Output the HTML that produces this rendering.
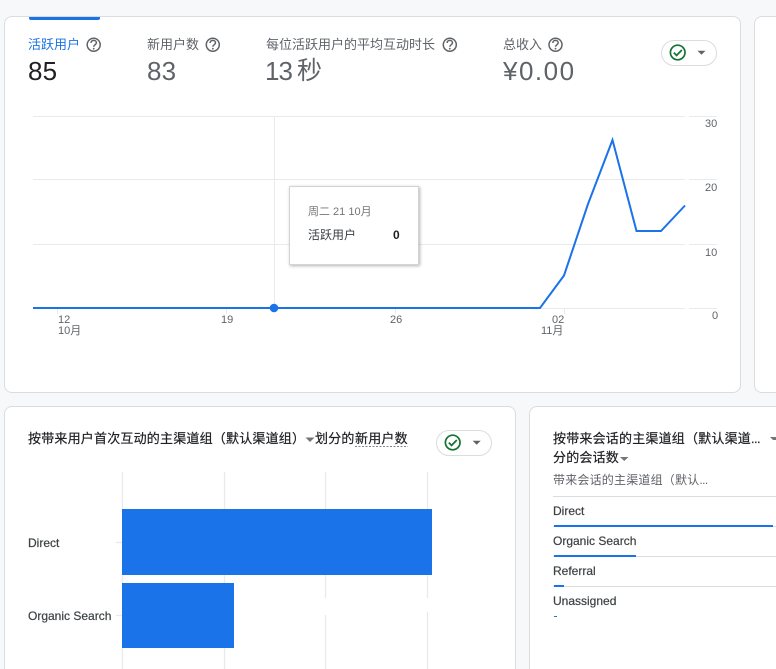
<!DOCTYPE html>
<html lang="zh">
<head>
<meta charset="utf-8">
<title>Analytics</title>
<style>
html,body{margin:0;padding:0;width:776px;height:669px;overflow:hidden;background:#f7f8fa;font-family:"Liberation Sans","Noto Sans CJK SC",sans-serif;}
#w{position:relative;width:776px;height:669px;overflow:hidden;}
.card{position:absolute;background:#fff;border:1px solid #dadce0;border-radius:8px;box-sizing:border-box;}
.t{position:absolute;white-space:nowrap;line-height:16px;}
.lb{font-size:13px;color:#5f6368;height:16px;}
.val{font-size:26px;color:#5f6368;line-height:30px;letter-spacing:.2px;}
.ax{font-size:11px;color:#5f6368;line-height:12px;}
.ti{font-size:13px;color:#202124;letter-spacing:.2px;-webkit-text-stroke:.2px #202124;}
.rw{font-size:12px;color:#3c4043;-webkit-text-stroke:.2px #3c4043;}
.b{position:absolute;background:#1a73e8;}
.g{position:absolute;background:#dadce0;}
.d{letter-spacing:-.6px;}
svg{position:absolute;overflow:hidden;}
</style>
</head>
<body>
<div id="w">
<div class="card" style="left:4px;top:16px;width:737px;height:377px"></div>
<div class="card" style="left:754px;top:16px;width:22px;height:377px;border-right:0;border-radius:8px 0 0 8px"></div>
<div class="card" style="left:4px;top:406px;width:512px;height:263px;border-bottom:0;border-radius:8px 8px 0 0"></div>
<div class="card" style="left:529px;top:406px;width:247px;height:263px;border-bottom:0;border-right:0;border-radius:8px 0 0 0"></div>

<div class="b" style="left:29px;top:17px;width:71px;height:3px;border-radius:0 0 2px 2px"></div>

<div class="t lb" style="left:28px;top:37px;color:#1a73e8">活跃用户</div>
<div class="t val" style="left:28px;top:56px;color:#202124">85</div>
<div class="t lb" style="left:147px;top:37px">新用户数</div>
<div class="t val" style="left:147px;top:56px">83</div>
<div class="t lb" style="left:266px;top:37px">每位活跃用户的平均互动时长</div>
<div class="t val" style="left:265px;top:56px;letter-spacing:-1px">13</div>
<div class="t val" style="left:297px;top:56px;letter-spacing:0;font-size:25px">秒</div>
<div class="t lb" style="left:503px;top:37px">总收入</div>
<div class="t val" style="left:503px;top:56px;letter-spacing:1.500px">¥0.00</div>

<svg style="left:0;top:0" width="776" height="669" viewBox="0 0 776 669">
  <g fill="none" stroke="#5f6368" stroke-width="1.5">
    <circle cx="93.7" cy="44.7" r="6.5"/><path d="M91 43c0-1.600 1.200-2.600 2.700-2.600s2.700 1 2.700 2.400c0 2-2.700 2-2.700 4"/>
    <circle cx="212.8" cy="44.7" r="6.5"/><path d="M210.100 43c0-1.600 1.200-2.600 2.700-2.600s2.700 1 2.700 2.400c0 2-2.700 2-2.700 4"/>
    <circle cx="449.800" cy="44.7" r="6.5"/><path d="M447.100 43c0-1.600 1.200-2.600 2.700-2.600s2.700 1 2.700 2.400c0 2-2.700 2-2.700 4"/>
    <circle cx="555.500" cy="44.7" r="6.5"/><path d="M552.800 43c0-1.600 1.200-2.600 2.700-2.600s2.700 1 2.700 2.400c0 2-2.700 2-2.700 4"/>
  </g>
  <g fill="#5f6368">
    <circle cx="93.7" cy="48.700" r=".9"/><circle cx="212.8" cy="48.700" r=".9"/><circle cx="449.800" cy="48.700" r=".9"/><circle cx="555.500" cy="48.700" r=".9"/>
  </g>

  <rect x="661.500" y="40.500" width="55" height="25" rx="12.500" fill="#fff" stroke="#dadce0"/>
  <circle cx="677.700" cy="52.500" r="7.300" fill="none" stroke="#137333" stroke-width="1.700"/>
  <path d="M673.800 52.600l2.800 2.800 5.200-5.400" fill="none" stroke="#137333" stroke-width="1.700"/>
  <path d="M697.500 50.700h8l-4 4z" fill="#5f6368"/>

  <rect x="436.500" y="430.500" width="55" height="25" rx="12.500" fill="#fff" stroke="#dadce0"/>
  <circle cx="452.700" cy="442.500" r="7.300" fill="none" stroke="#137333" stroke-width="1.700"/>
  <path d="M448.800 442.600l2.800 2.800 5.200-5.400" fill="none" stroke="#137333" stroke-width="1.700"/>
  <path d="M472.700 440.700h8l-4 4z" fill="#5f6368"/>

  <g stroke="#e8eaed" stroke-width="1" fill="none">
    <path d="M33 116.500H685M689 116.500H717"/>
    <path d="M33 179.500H685M689 179.500H717"/>
    <path d="M33 244.500H685M689 244.500H717"/>
    <path d="M33 308.500H685M689 308.500H717"/>
    <path d="M274.500 116V308"/>
    <path d="M57.500 308V314M226.500 308V314M395.500 308V314M564.500 308V314"/>
  </g>
  <polyline points="33,308 540,308 564,275.500 588,204 612.500,140 636.500,231 661,231 685,205.500" fill="none" stroke="#1a73e8" stroke-width="2"/>
  <circle cx="274" cy="308" r="4.300" fill="#1a73e8"/>

  <g stroke="#e8eaed" stroke-width="1.300" fill="none">
    <path d="M122.500 472V669M224.500 472V669M325.500 472V598M325.500 615V669M427.500 472V598M427.500 612V669"/>
    <path d="M116 542.500H122M116 615.500H122"/>
  </g>
  <path d="M305.500 437.500h9l-4.500 4.500z" fill="#757575"/>
  <path d="M355 446.500H408" stroke="#80868b" stroke-dasharray="2 1.500" fill="none"/>
  <path d="M770 437h6v3h-3z" fill="#757575"/>
  <path d="M620 457h8.500l-4.250 4z" fill="#757575"/>
</svg>

<div class="t ax" style="left:705px;top:118px">30</div>
<div class="t ax" style="left:705px;top:182px">20</div>
<div class="t ax" style="left:705px;top:247px">10</div>
<div class="t ax" style="left:712px;top:310px">0</div>
<div class="t ax" style="left:58px;top:314px">12</div>
<div class="t ax" style="left:58px;top:325px">10月</div>
<div class="t ax" style="left:221px;top:314px">19</div>
<div class="t ax" style="left:390px;top:314px">26</div>
<div class="t ax" style="left:552px;top:314px">02</div>
<div class="t ax" style="left:541px;top:325px">11月</div>

<div style="position:absolute;left:289px;top:186px;width:130px;height:79px;box-sizing:border-box;background:#fff;border:1px solid #d4d4d4;box-shadow:1px 1px 3px rgba(0,0,0,.3)"></div>
<div class="t" style="left:308px;top:204px;font-size:11px;color:#757575">周二 21 10月</div>
<div class="t" style="left:308px;top:227px;font-size:12px;color:#3c4043">活跃用户</div>
<div class="t" style="left:393px;top:227px;font-size:12px;font-weight:bold;color:#202124">0</div>

<div class="t ti" style="left:28px;top:431px">按带来用户首次互动的主渠道组（默认渠道组）</div>
<div class="t ti" style="left:315px;top:431px">划分的</div>
<div class="t ti" style="left:355px;top:431px">新用户数</div>

<div class="b" style="left:122px;top:509px;width:310px;height:66px"></div>
<div class="b" style="left:122px;top:583px;width:112px;height:65px"></div>
<div class="t rw" style="left:28px;top:535px">Direct</div>
<div class="t rw" style="left:28px;top:608px">Organic Search</div>

<div class="t ti" style="left:553px;top:431px">按带来会话的主渠道组（默认渠道<span class="d">...</span></div>
<div class="t ti" style="left:553px;top:450px">分的会话数</div>
<div class="t" style="left:553px;top:472px;font-size:12px;color:#5f6368;letter-spacing:.2px">带来会话的主渠道组（默认<span class="d">...</span></div>

<div class="g" style="left:553px;top:496px;width:223px;height:1px"></div>
<div class="t rw" style="left:553px;top:503px">Direct</div>
<div class="g" style="left:553px;top:526px;width:223px;height:1px"></div>
<div class="b" style="left:554px;top:525px;width:219px;height:2px"></div>
<div class="t rw" style="left:553px;top:533px">Organic Search</div>
<div class="g" style="left:553px;top:556px;width:223px;height:1px"></div>
<div class="b" style="left:554px;top:555px;width:82px;height:2px"></div>
<div class="t rw" style="left:553px;top:563px">Referral</div>
<div class="g" style="left:553px;top:586px;width:223px;height:1px"></div>
<div class="b" style="left:554px;top:585px;width:10px;height:2px"></div>
<div class="t rw" style="left:553px;top:593px">Unassigned</div>
<div class="b" style="left:554px;top:616px;width:3px;height:1px"></div>
</div>
</body>
</html>
